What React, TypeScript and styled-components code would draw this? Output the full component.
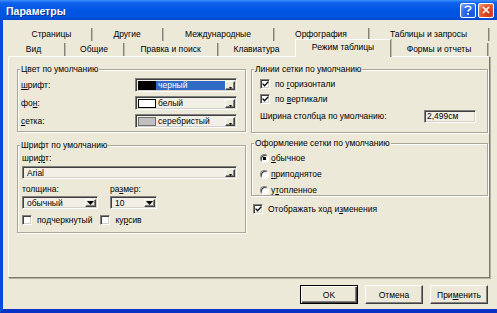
import styled, { createGlobalStyle } from 'styled-components';

const GlobalStyle = createGlobalStyle`
    html, body {
        margin: 0;
        padding: 0;
        background: #fff;
    }
    body {
        font-family: 'Liberation Sans', Arial, sans-serif;
        font-size: 8.5px;
        color: #000;
    }
    * {
        box-sizing: border-box;
    }
`;

const bg = '#ECE9D8';
const field = '#F2F0E6';

const topTabs = [
    { label: 'Страницы', w: 80 },
    { label: 'Другие', w: 71 },
    { label: 'Международные', w: 111 },
    { label: 'Орфография', w: 95 },
    { label: 'Таблицы и запросы', w: 120 },
];

const frontTabs = [
    { label: 'Вид', w: 62 },
    { label: 'Общие', w: 59 },
    { label: 'Правка и поиск', w: 94 },
    { label: 'Клавиатура', w: 78 },
    { label: 'Режим таблицы', w: 96, active: true },
    { label: 'Формы и отчеты', w: 97 },
];

const colorRows = [
    { label: <><u>ш</u>рифт:</>, value: 'черный', swatch: '#000', edge: '#000', selected: true },
    { label: <>фо<u>н</u>:</>, value: 'белый', swatch: '#fff', edge: '#000' },
    { label: <><u>с</u>етка:</>, value: 'серебристый', swatch: '#C0C0C0', edge: '#6f6f6f' },
];

const Arrow = ({ big }: { big?: boolean }) =>
    big ? (
        <svg width='7' height='4' viewBox='0 0 7 4'>
            <path d='M0 0h7L3.5 4z' fill='#000' />
        </svg>
    ) : (
        <svg width='3' height='2' viewBox='0 0 3 2' style={{ marginTop: 4 }}>
            <path d='M0 0h3L1.5 2z' fill='#000' />
        </svg>
    );

const Check = () => (
    <svg width='7' height='6' viewBox='0 0 7 6'>
        <path d='M0.6 2.6 L2.6 4.8 L6.4 0.6' fill='none' stroke='#000' strokeWidth='1.4' />
    </svg>
);

const App = () => (
    <>
        <GlobalStyle />
        <Window>
            <TitleBar>
                <Title>Параметры</Title>
                <CaptionButton>
                    <svg width='8' height='10' viewBox='0 0 8 10'>
                        <path
                            d='M1.2 3 C1.2 0.6 6.8 0.6 6.8 3 C6.8 4.6 4 4.8 4 6.6'
                            fill='none'
                            stroke='#fff'
                            strokeWidth='1.6'
                        />
                        <rect x='3.1' y='8' width='1.8' height='1.8' fill='#fff' />
                    </svg>
                </CaptionButton>
                <CaptionButton $close>
                    <svg width='8' height='8' viewBox='0 0 8 8'>
                        <path d='M1 1L7 7M7 1L1 7' stroke='#fff' strokeWidth='1.7' />
                    </svg>
                </CaptionButton>
            </TitleBar>

            <Frame>
                <TabStrip>
                    <TabRow $indent={9}>
                        {topTabs.map((t) => (
                            <Tab key={t.label} $w={t.w}>
                                {t.label}
                            </Tab>
                        ))}
                    </TabRow>
                    <TabRow $indent={0}>
                        {frontTabs.map((t) => (
                            <Tab key={t.label} $w={t.w} $active={t.active}>
                                {t.label}
                            </Tab>
                        ))}
                    </TabRow>
                </TabStrip>

                <Panel>
                    <Column $w={229}>
                        <Group $h={63} $mt={12} $pad='8px 0 0 3px'>
                            <Legend>Цвет по умолчанию</Legend>
                            {colorRows.map((r) => (
                                <FieldRow key={r.value}>
                                    <FieldLabel $w={114}>{r.label}</FieldLabel>
                                    <Combo $w={102} $h={14}>
                                        <Swatch $fill={r.swatch} $edge={r.edge} />
                                        <ComboValue $selected={r.selected}>{r.value}</ComboValue>
                                        <DropButton>
                                            <Arrow />
                                        </DropButton>
                                    </Combo>
                                </FieldRow>
                            ))}
                        </Group>

                        <Group $h={88} $mt={13} $pad='7px 0 0 4px'>
                            <Legend>Шрифт по умолчанию</Legend>
                            <Caption>
                                шри<u>ф</u>т:
                            </Caption>
                            <Combo $w={215} $h={13} $mt={3}>
                                <ComboValue>Arial</ComboValue>
                                <DropButton>
                                    <Arrow />
                                </DropButton>
                            </Combo>
                            <SplitRow>
                                <SubColumn $w={88}>
                                    <Caption $mt={5}>толщина:</Caption>
                                    <Combo $w={76} $h={13} $mt={2}>
                                        <ComboValue>обычный</ComboValue>
                                        <DropButton $wide>
                                            <Arrow big />
                                        </DropButton>
                                    </Combo>
                                </SubColumn>
                                <SubColumn $w={60}>
                                    <Caption $mt={5}>
                                        ра<u>з</u>мер:
                                    </Caption>
                                    <Combo $w={47} $h={13} $mt={2}>
                                        <ComboValue>10</ComboValue>
                                        <DropButton $wide>
                                            <Arrow big />
                                        </DropButton>
                                    </Combo>
                                </SubColumn>
                            </SplitRow>
                            <CheckRow $mt={6}>
                                <CheckBox />
                                <CheckLabel>
                                    по<u>д</u>черкнутый
                                </CheckLabel>
                                <CheckBox $ml={8} />
                                <CheckLabel>
                                    ку<u>р</u>сив
                                </CheckLabel>
                            </CheckRow>
                        </Group>
                    </Column>

                    <Column $w={237}>
                        <Group $h={64} $mt={12} $pad='9px 0 0 8px'>
                            <Legend>Линии сетки по умолчанию</Legend>
                            <CheckRow>
                                <CheckBox>
                                    <Check />
                                </CheckBox>
                                <CheckLabel>
                                    по <u>г</u>оризонтали
                                </CheckLabel>
                            </CheckRow>
                            <CheckRow $mt={5}>
                                <CheckBox>
                                    <Check />
                                </CheckBox>
                                <CheckLabel>
                                    по <u>в</u>ертикали
                                </CheckLabel>
                            </CheckRow>
                            <FieldRow $mt={5}>
                                <FieldLabel $w={164}>Ширина столбца по умолчанию:</FieldLabel>
                                <TextBox>2,499см</TextBox>
                            </FieldRow>
                        </Group>

                        <Group $h={53} $mt={10} $pad='9px 0 0 8px'>
                            <Legend>Оформление сетки по умолчанию</Legend>
                            <RadioRow>
                                <Radio $on />
                                <CheckLabel $gap={2}>
                                    <u>о</u>бычное
                                </CheckLabel>
                            </RadioRow>
                            <RadioRow $mt={6}>
                                <Radio />
                                <CheckLabel $gap={2}>
                                    <u>п</u>риподнятое
                                </CheckLabel>
                            </RadioRow>
                            <RadioRow $mt={6}>
                                <Radio />
                                <CheckLabel $gap={2}>
                                    у<u>т</u>опленное
                                </CheckLabel>
                            </RadioRow>
                        </Group>

                        <CheckRow $mt={8} $indent={2}>
                            <CheckBox>
                                <Check />
                            </CheckBox>
                            <CheckLabel>
                                Отображать ход и<u>з</u>менения
                            </CheckLabel>
                        </CheckRow>
                    </Column>
                </Panel>

                <ButtonBar>
                    <Button $default>OK</Button>
                    <Button>Отмена</Button>
                    <Button>
                        При<u>м</u>енить
                    </Button>
                </ButtonBar>
            </Frame>
        </Window>
    </>
);

const Window = styled.div`
    width: 497px;
    height: 313px;
    display: flex;
    flex-direction: column;
    overflow: hidden;
`;

const TitleBar = styled.div`
    height: 20px;
    flex: none;
    display: flex;
    align-items: center;
    gap: 2px;
    padding: 0 3px 0 6px;
    background: linear-gradient(#3d8ffb 0%, #0d63ec 14%, #0055e5 50%, #0453de 85%, #0346cf 100%);
`;

const Title = styled.span`
    flex: 1;
    padding-top: 2px;
    color: #fff;
    font-size: 10.5px;
    font-weight: bold;
    text-shadow: 1px 1px 0 #0b2f96;
`;

const CaptionButton = styled.span<{ $close?: boolean }>`
    width: 16px;
    height: 15px;
    display: flex;
    align-items: center;
    justify-content: center;
    border: 1px solid #fff;
    border-radius: 2px;
    background: ${(p) =>
        p.$close
            ? 'radial-gradient(circle at 70% 75%, #cc3a12, #e2582f 55%, #f3a58a)'
            : 'radial-gradient(circle at 70% 75%, #1a52d6, #2d6df0 55%, #86b2ff)'};
`;

const Frame = styled.div`
    flex: 1;
    display: flex;
    flex-direction: column;
    background: ${bg};
    border-left: 3px solid #0a4bdc;
    border-bottom: 4px solid #0833c6;
`;

const TabStrip = styled.div`
    padding-top: 7px;
    position: relative;
    z-index: 1;
`;

const TabRow = styled.div<{ $indent: number }>`
    display: flex;
    align-items: flex-end;
    height: 14px;
    padding-left: ${(p) => p.$indent}px;
    & + & {
        margin-top: 1px;
    }
`;

const Tab = styled.div<{ $w: number; $active?: boolean }>`
    width: ${(p) => p.$w}px;
    height: ${(p) => (p.$active ? 18 : 13)}px;
    margin-bottom: ${(p) => (p.$active ? -1 : 0)}px;
    padding-top: ${(p) => (p.$active ? 1 : 0)}px;
    line-height: 13px;
    text-align: center;
    white-space: nowrap;
    background: ${(p) => (p.$active ? bg : 'transparent')};
    border-right: 1px solid #85837a;
    box-shadow: 1px 0 0 #bdbaac;
    ${(p) => (p.$active ? 'border-left: 1px solid #fff; border-top: 1px solid #fff; margin-left: -1px;' : '')}
`;

const Panel = styled.div`
    margin-left: 5px;
    width: 482px;
    height: 222px;
    flex: none;
    display: flex;
    gap: 5px;
    padding: 0 1px 0 8px;
    border-top: 1px solid #fff;
    border-left: 1px solid #fff;
    border-right: 1px solid #7e7c70;
    border-bottom: 1px solid #7e7c70;
    box-shadow: 1px 1px 0 #b3b0a2;
`;

const Column = styled.div<{ $w: number }>`
    width: ${(p) => p.$w}px;
    display: flex;
    flex-direction: column;
`;

const Group = styled.div<{ $h: number; $mt: number; $pad: string }>`
    position: relative;
    height: ${(p) => p.$h}px;
    margin-top: ${(p) => p.$mt}px;
    padding: ${(p) => p.$pad};
    border: 1px solid #a9a597;
    box-shadow: inset 1px 1px 0 #fff, 1px 1px 0 #fff;
    display: flex;
    flex-direction: column;
    flex: none;
`;

const Legend = styled.span`
    position: absolute;
    top: -6px;
    left: 2px;
    padding: 0 1px;
    line-height: 10px;
    background: ${bg};
    white-space: nowrap;
`;

const FieldRow = styled.div<{ $mt?: number }>`
    display: flex;
    align-items: center;
    height: 14px;
    margin-top: ${(p) => p.$mt ?? 0}px;
    margin-bottom: 4px;
`;

const FieldLabel = styled.span<{ $w: number }>`
    width: ${(p) => p.$w}px;
    flex: none;
    white-space: nowrap;
`;

const Caption = styled.span<{ $mt?: number }>`
    display: block;
    line-height: 10px;
    margin-top: ${(p) => p.$mt ?? 0}px;
`;

const Combo = styled.div<{ $w: number; $h: number; $mt?: number }>`
    width: ${(p) => p.$w}px;
    height: ${(p) => p.$h}px;
    margin-top: ${(p) => p.$mt ?? 0}px;
    flex: none;
    display: flex;
    padding: 2px 1px 1px 2px;
    background: ${field};
    border: 1px solid;
    border-color: #808080 #fff #fff #808080;
    box-shadow: inset 1px 1px 0 #404040, inset -1px -1px 0 #d4d0c8;
`;

const Swatch = styled.span<{ $fill: string; $edge: string }>`
    width: 18px;
    flex: none;
    background: ${(p) => p.$fill};
    border: 1px solid ${(p) => p.$edge};
`;

const ComboValue = styled.span<{ $selected?: boolean }>`
    flex: 1;
    padding-left: 2px;
    line-height: 9px;
    white-space: nowrap;
    overflow: hidden;
    background: ${(p) => (p.$selected ? '#316ac5' : 'transparent')};
    color: ${(p) => (p.$selected ? '#fff' : '#000')};
`;

const DropButton = styled.span<{ $wide?: boolean }>`
    width: ${(p) => (p.$wide ? 11 : 10)}px;
    flex: none;
    display: flex;
    align-items: center;
    justify-content: center;
    background: ${bg};
    border: 1px solid;
    border-color: #fff #404040 #404040 #fff;
    box-shadow: inset -1px -1px 0 #808080;
`;

const SplitRow = styled.div`
    display: flex;
`;

const SubColumn = styled.div<{ $w: number }>`
    width: ${(p) => p.$w}px;
    display: flex;
    flex-direction: column;
`;

const CheckRow = styled.div<{ $mt?: number; $indent?: number }>`
    display: flex;
    align-items: center;
    height: 10px;
    margin-top: ${(p) => p.$mt ?? 0}px;
    padding-left: ${(p) => p.$indent ?? 0}px;
`;

const RadioRow = styled(CheckRow)``;

const CheckBox = styled.span<{ $ml?: number }>`
    width: 10px;
    height: 10px;
    flex: none;
    margin-left: ${(p) => p.$ml ?? 0}px;
    display: flex;
    align-items: center;
    justify-content: center;
    background: #fff;
    border: 1px solid;
    border-color: #808080 #fff #fff #808080;
    box-shadow: inset 1px 1px 0 #404040, inset -1px -1px 0 #d4d0c8;
`;

const Radio = styled.span<{ $on?: boolean }>`
    width: 9px;
    height: 9px;
    flex: none;
    border-radius: 50%;
    border: 1px solid;
    border-color: #808080 #fff #fff #808080;
    background: ${(p) => (p.$on ? 'radial-gradient(circle, #000 0 1.5px, #fff 1.8px)' : '#fff')};
    box-shadow: inset 1px 1px 0 #404040;
`;

const CheckLabel = styled.span<{ $gap?: number }>`
    margin-left: ${(p) => p.$gap ?? 5}px;
    line-height: 10px;
    white-space: nowrap;
`;

const TextBox = styled.span`
    width: 52px;
    height: 13px;
    flex: none;
    padding: 1px 0 0 2px;
    line-height: 9px;
    background: ${field};
    border: 1px solid;
    border-color: #808080 #fff #fff #808080;
    box-shadow: inset 1px 1px 0 #404040, inset -1px -1px 0 #d4d0c8;
`;

const ButtonBar = styled.div`
    display: flex;
    justify-content: flex-end;
    gap: 7px;
    margin-top: 7px;
    padding-right: 9px;
`;

const Button = styled.div<{ $default?: boolean }>`
    width: 58px;
    height: 19px;
    display: flex;
    align-items: center;
    justify-content: center;
    background: ${bg};
    border: 1px solid;
    border-color: ${(p) => (p.$default ? '#000' : '#fff #404040 #404040 #fff')};
    box-shadow: ${(p) =>
        p.$default
            ? 'inset 1px 1px 0 #fff, inset -1px -1px 0 #404040, inset -2px -2px 0 #808080'
            : 'inset -1px -1px 0 #808080'};
`;

export default App;
